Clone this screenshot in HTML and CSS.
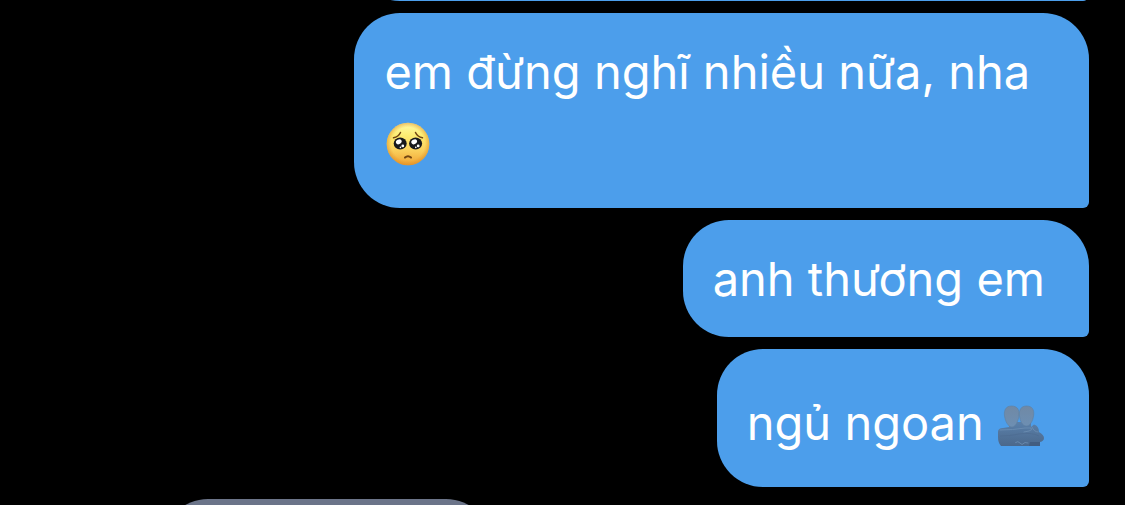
FILE: index.html
```html
<!DOCTYPE html>
<html lang="vi">
<head>
<meta charset="UTF-8" />
<meta name="viewport" content="width=device-width, initial-scale=1" />
<title>Chat</title>
<link rel="stylesheet" href="styles.css">
</head>
<body>

<main class="chat">
  <div class="bubble sent previous"></div>

  <div class="bubble sent">em đừng nghĩ nhiều nữa, nha
    <svg class="emoji" viewBox="0 0 48 48" role="img" aria-label="🥺">
      <defs>
        <linearGradient id="skin" x1="0" y1="0" x2="0" y2="1">
          <stop offset="0" stop-color="#fffba8" />
          <stop offset="0.3" stop-color="#fdec72" />
          <stop offset="0.65" stop-color="#fad05c" />
          <stop offset="1" stop-color="#f0a233" />
        </linearGradient>
        <radialGradient id="edge">
          <stop offset="0.78" stop-color="#e08a20" stop-opacity="0" />
          <stop offset="1" stop-color="#d98520" stop-opacity="0.5" />
        </radialGradient>
      </defs>
      <circle cx="24" cy="25" r="21.3" fill="url(#skin)" />
      <circle cx="24" cy="25" r="21.3" fill="url(#edge)" />
      <g fill="none" stroke="#714512" stroke-linecap="round" stroke-width="1.5">
        <path d="M9.5 18.8Q14.5 18 16.5 13.5" />
        <path d="M38.5 18.8Q33.5 18 31.5 13.5" />
        <path d="M21 38.6Q24 35.8 27 38.6" stroke-width="2" />
      </g>
      <g fill="#18191c">
        <ellipse cx="16.2" cy="24.5" rx="6.5" ry="6.1" />
        <ellipse cx="31.6" cy="24.5" rx="6.5" ry="6.1" />
      </g>
      <g fill="#fff">
        <ellipse cx="14.8" cy="22.8" rx="3" ry="2.3" transform="rotate(-30 14.8 22.8)" />
        <ellipse cx="30.2" cy="22.8" rx="3" ry="2.3" transform="rotate(-30 30.2 22.8)" />
        <circle cx="18.8" cy="26.9" r="1.4" />
        <circle cx="34.2" cy="26.9" r="1.4" />
        <circle cx="16.4" cy="28.4" r="0.8" />
        <circle cx="31.8" cy="28.4" r="0.8" />
      </g>
    </svg>
  </div>

  <div class="bubble sent">anh thương em</div>

  <div class="bubble sent">ngủ ngoan
    <svg class="emoji" viewBox="0 0 48 48" role="img" aria-label="🫂">
      <defs>
        <linearGradient id="head" x1="0" y1="0" x2="0" y2="1">
          <stop offset="0" stop-color="#7089a5" />
          <stop offset="1" stop-color="#6d8fb3" />
        </linearGradient>
        <linearGradient id="torso" x1="0" y1="0" x2="0" y2="1">
          <stop offset="0" stop-color="#5a80aa" />
          <stop offset="1" stop-color="#4b688b" />
        </linearGradient>
      </defs>
      <path d="M1 34Q1 30 6 30L12 29V24H34V29L37 26.5Q42 28 42 34Q47 37 47 40Q47 43 43 44V48H4Q1 45 1 39Z" fill="url(#torso)" />
      <path d="M14.5 8C20.5 8 22.4 12 22 17C21.500 23 18.500 29 15 29C11 29 8 23 7.400 17C7 12 9 8 14.500 8Z" fill="url(#head)" stroke="#5f7f9f" stroke-width="0.6" />
      <path d="M29.5 8C35.500 8 37.200 12 36.700 17C36 23 33 28 29.500 28C25.500 28 22.800 23 22.400 17C22 12 24 8 29.500 8Z" fill="url(#head)" stroke="#5f7f9f" stroke-width="0.6" />
      <g fill="none" stroke="#6d8fb4" stroke-linecap="round" stroke-width="0.8">
        <path d="M3 32Q16 32 28 30L34 30Q36 32 32 33L27 34" />
        <path d="M35 29Q37 34 41 34" />
        <path d="M18.500 44.500Q21 42.500 23 45L25 46.500L28 44.500L31 45" />
      </g>
      <path d="M3 38Q13 38 22 36Q34 34 42 38" fill="none" stroke="#4d6c91" stroke-width="0.7" />
      <path d="M33 44H43V48H32Z" fill="#425d80" />
    </svg>
  </div>

  <div class="bubble received"></div>
</main>

</body>
</html>
```
FILE: styles.css
```css
* {
  box-sizing: border-box;
}
body {
  margin: 0;
  background: #000;
  overflow: hidden;
}
.chat {
  display: flex;
  flex-direction: column;
  gap: 12px;
  height: 100vh;
  padding: 0 36px 0 162px;
  overflow: hidden;
  font-family: Inter, "Noto Sans", sans-serif;
  font-size: 47px;
  line-height: 57px;
}
.bubble {
  flex-shrink: 0;
  max-width: 65.3vw;
  min-height: 117px;
  padding: 30px 44px 30px 30px;
  border-radius: 46px;
  color: #fff;
}
.sent {
  align-self: flex-end;
  border-bottom-right-radius: 6px;
  background: #4c9eeb;
}
/* scrolled almost out of view */
.previous {
  width: 65.3vw;
  margin-top: -116px;
}
.received {
  align-self: flex-start;
  width: 330px;
  border-bottom-left-radius: 6px;
  background: #6b7489;
}
.emoji {
  width: 48px;
  height: 48px;
  margin: 19px 0 11px;
  vertical-align: -17px;
}
```
